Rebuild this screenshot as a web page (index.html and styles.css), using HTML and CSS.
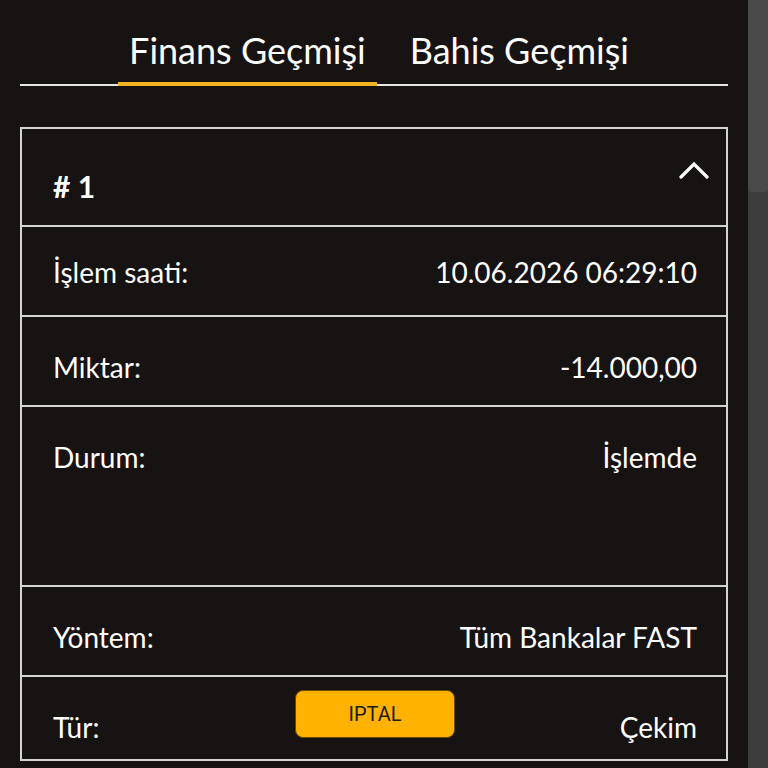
FILE: index.html
```html
<!DOCTYPE html>
<html lang="tr">
<head>
<meta charset="utf-8">
<link rel="stylesheet" href="styles.css">
</head>
<body>
<div class="page">
  <main class="main">
    <nav class="tabs">
      <div class="tab active">Finans Geçmişi</div>
      <div class="tab">Bahis Geçmişi</div>
    </nav>
    <section class="card">
      <div class="card-head">
        <span class="num"># 1</span>
        <svg class="chev" width="30" height="20" viewBox="0 0 30 20"><path d="M2 17 L15 4 L28 17" fill="none" stroke="#fff" stroke-width="3.2" stroke-linecap="round" stroke-linejoin="miter"/></svg>
      </div>
      <div class="row r-time"><span>İşlem saati:</span><span>10.06.2026 06:29:10</span></div>
      <div class="row r-amount"><span>Miktar:</span><span>-14.000,00</span></div>
      <div class="row r-status"><span>Durum:</span><span>İşlemde</span></div>
      <div class="row r-method"><span>Yöntem:</span><span>Tüm Bankalar FAST</span></div>
      <div class="row r-type">
        <span class="lbl">Tür:</span>
        <button class="cancel">IPTAL</button>
        <span class="val">Çekim</span>
      </div>
    </section>
  </main>
  <aside class="scroll"><div class="thumb"></div></aside>
</div>
</body>
</html>
```
FILE: styles.css
```css
html, body {
  margin: 0;
  padding: 0;
  height: 768px;
  overflow: hidden;
  background: #161312;
}
.page {
  display: flex;
  height: 768px;
  font-family: Lato, "Noto Sans", sans-serif;
  color: #fff;
}
.main {
  width: 708px;
  padding: 0 20px;
  flex: none;
}
.scroll {
  width: 20px;
  flex: none;
  background: #3c3c3c;
}
.thumb {
  height: 192px;
  background: #4a4a4a;
  border-radius: 0 0 4px 4px;
}
.tabs {
  display: flex;
  justify-content: center;
  gap: 22px;
  padding-top: 30px;
  padding-left: 10px;
  border-bottom: 2px solid #e6e6e6;
}
.tab {
  font-size: 36px;
  line-height: 40px;
  padding: 0 11px 12px;
  border-bottom: 4px solid transparent;
  margin-bottom: -2px;
}
.tab.active {
  border-bottom-color: #f4b323;
}
.card {
  margin-top: 41px;
  border: 2px solid #d4d4d4;
  border-bottom: none;
}
.card-head {
  height: 96px;
  display: flex;
  justify-content: space-between;
  align-items: flex-start;
  padding: 0 17px 0 31px;
}
.num {
  font-weight: 700;
  font-size: 30px;
  line-height: 32px;
  margin-top: 41px;
}
.chev {
  margin-top: 31px;
}
.row {
  border-top: 2px solid #d4d4d4;
  display: flex;
  justify-content: space-between;
  align-items: flex-start;
  padding: 0 29px 0 31px;
  font-size: 28px;
  line-height: 32px;
  box-sizing: border-box;
}
.r-time { height: 90px; padding-top: 29px; }
.r-amount { height: 90px; padding-top: 34px; }
.r-status { height: 180px; padding-top: 34px; }
.r-method { height: 90px; padding-top: 34px; }
.r-type {
  height: 86px;
  display: grid;
  grid-template-columns: 1fr auto 1fr;
  padding-top: 0;
  border-bottom: 2px solid #d4d4d4;
}
.r-type .lbl { margin-top: 34px; }
.r-type .val { margin-top: 34px; justify-self: end; }
.cancel {
  margin-top: 13px;
  width: 160px;
  height: 48px;
  border: 1px solid #6b4a00;
  border-radius: 8px;
  background: #ffb300;
  color: #1c1a17;
  font-family: Roboto, "Liberation Sans", sans-serif;
  font-size: 20px;
  padding: 0;
}
```
